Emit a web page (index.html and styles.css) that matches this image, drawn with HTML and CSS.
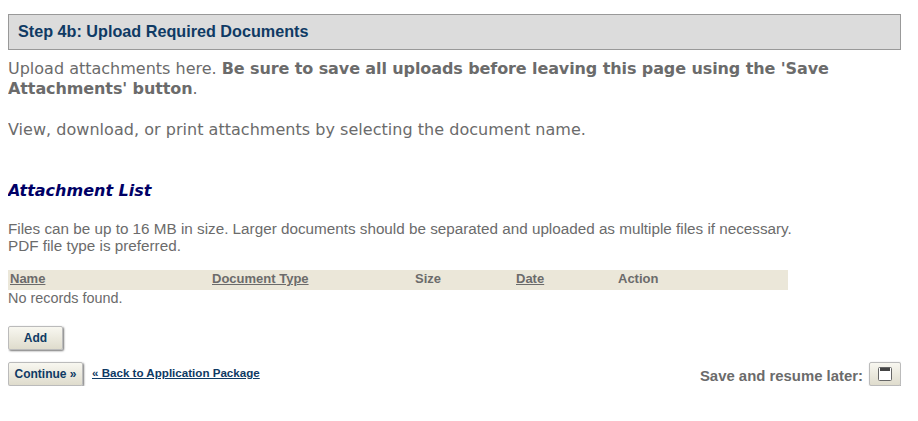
FILE: index.html
```html
<!DOCTYPE html>
<html lang="en">
<head>
    <meta charset="UTF-8">
    <title>Upload Required Documents</title>
    <link rel="stylesheet" href="styles.css">
</head>
<body>

<div class="step-title">Step 4b: Upload Required Documents</div>

<div class="intro">
    <p>Upload attachments here. <b>Be sure to save all uploads before leaving this page using the 'Save Attachments' button</b>.</p>
    <p>View, download, or print attachments by selecting the document name.</p>
</div>

<h2 class="list-title">Attachment List</h2>

<p class="note">Files can be up to 16 MB in size. Larger documents should be separated and uploaded as multiple files if necessary.<br>PDF file type is preferred.</p>

<table class="list">
    <thead>
        <tr>
            <th class="col-name"><a href="#">Name</a></th>
            <th class="col-type"><a href="#">Document Type</a></th>
            <th class="col-size">Size</th>
            <th class="col-date"><a href="#">Date</a></th>
            <th class="col-action">Action</th>
        </tr>
    </thead>
</table>
<div class="empty">No records found.</div>

<button class="btn btn-add" type="button">Add</button>

<div class="actions">
    <div class="actions-left">
        <button class="btn btn-continue" type="button">Continue »</button>
        <a class="back" href="#">« Back to Application Package</a>
    </div>
    <div class="actions-right">
        <span class="save-label">Save and resume later:</span>
        <button class="btn btn-save" type="button" aria-label="Save">
            <svg width="14" height="14" viewBox="0 0 14 14">
                <rect x="0.5" y="0.5" width="13" height="13" rx="1" fill="#fff" stroke="#666"/>
                <rect x="2" y="1" width="10" height="3" fill="#444"/>
            </svg>
        </button>
    </div>
</div>

</body>
</html>
```

FILE: styles.css
```css
body { margin: 14px 17px 0 8px; font-family: "Liberation Sans", Arial, sans-serif; font-size: 14px; color: #6b6b6b; background-color: #fff; }
.step-title { height: 34px; line-height: 33px; padding-left: 9px; border: 1px solid #999; background-color: #dcdcdc; color: #0f3a64; font-size: 16.2px; font-weight: bold; }
.intro { margin-top: 9px; font-family: "DejaVu Sans", Verdana, sans-serif; font-size: 16px; line-height: 20px; color: #6b6b6b; }
.intro p { margin: 0 0 21px 0; }
.intro p + p { letter-spacing: 0.03px; }
.intro b { letter-spacing: -0.1px; }
.list-title { margin: 40px 0 0 0; font-family: "DejaVu Sans", Verdana, sans-serif; font-size: 16px; line-height: 22px; font-style: italic; font-weight: bold; color: #000066; }
.note { margin: 18px 0 0 0; font-size: 15.25px; line-height: 17px; }
.list { width: 780px; margin-top: 16px; border-collapse: collapse; table-layout: fixed; background-color: #ebe7d9; }
.list th { box-sizing: border-box; height: 20px; padding: 0 0 3px 2px; text-align: left; font-size: 13px; color: #6b6b6b; }
.list th a { color: #6b6b6b; }
.col-name { width: 202px; }
.col-type { width: 203px; }
.col-size { width: 101px; }
.col-date { width: 102px; }
.empty { font-size: 14.4px; line-height: 17px; }
.btn { display: block; padding: 0; border: 1px solid #bbb; border-radius: 2px; background: linear-gradient(#f8f7f0, #dfdccd); box-shadow: 1px 1px 2px #777; color: #0f3a64; font-family: "Liberation Sans", Arial, sans-serif; font-size: 12px; font-weight: bold; }
.btn-add { width: 55px; height: 24px; margin-top: 19px; }
.actions { display: flex; justify-content: space-between; margin-top: 12px; }
.actions-left { display: flex; align-items: flex-start; }
.btn-continue { width: 75px; height: 24px; }
.back { margin: 4px 0 0 9px; font-size: 11.6px; font-weight: bold; color: #0f3a64; }
.actions-right { display: flex; align-items: flex-start; }
.save-label { margin: 6px 6px 0 0; font-size: 14.9px; font-weight: bold; color: #6b6b6b; }
.btn-save { display: flex; align-items: center; justify-content: center; width: 32px; height: 24px; }
```
